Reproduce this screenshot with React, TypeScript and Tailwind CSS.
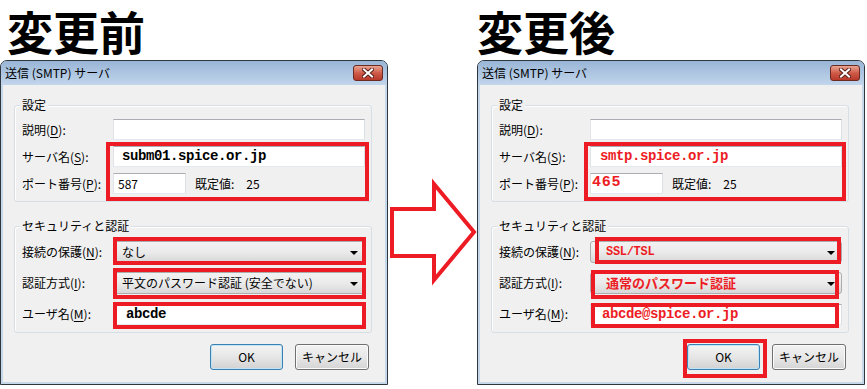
import React from 'react';

const ui = "font-['Noto_Sans_CJK_JP',sans-serif]";
const mono = "font-['Liberation_Mono',monospace]";

// mnemonic label like 説明(D):
const Label = ({ text, k }: { text: string; k: string }) => (
    <span className="text-[12px] leading-[16px] text-black whitespace-nowrap">
        {text}(<span className="underline underline-offset-[2px]">{k}</span>):
    </span>
);

const TextBox = ({ children, className = '' }: { children?: React.ReactNode; className?: string }) => (
    <div className={`h-[21px] bg-white border border-[#abadb3] border-l-[#e2e3ea] border-r-[#dbdfe6] border-b-[#e3e9ef] flex items-center overflow-hidden ${className}`}>
        {children}
    </div>
);

const Combo = ({ children }: { children?: React.ReactNode }) => (
    <div className="h-[22px] rounded-[3px] border border-[#acacac] bg-linear-to-b from-[#f2f2f2] via-[#ebebeb] to-[#d8d8d8] flex items-center justify-between pr-[6px] overflow-hidden">
        {children}
        <span className="w-0 h-0 border-x-[4px] border-x-transparent border-t-[4px] border-t-black mt-[2px]" />
    </div>
);

const Group = ({ title, children, className = '' }: { title: string; children: React.ReactNode; className?: string }) => (
    <div className={`relative border border-[#d5dfe5] rounded-[3px] shadow-[inset_1px_1px_0_#ffffff] ${className}`}>
        <span className="absolute -top-[9px] left-[5px] bg-[#f0f0f0] px-[2px] text-[12px] leading-[16px] text-black">{title}</span>
        {children}
    </div>
);

const CloseButton = () => (
    <div className="w-[30px] h-[16px] rounded-[3px] border border-[#6b2a22] bg-linear-to-b from-[#e8a493] via-[#cf5a48] to-[#b8382a] flex items-center justify-center">
        <svg width="12" height="10" viewBox="0 0 12 10">
            <path d="M2 1.5 L10 8.5 M10 1.5 L2 8.5" stroke="#5a1f18" strokeWidth="4" strokeLinecap="square" />
            <path d="M2 1.5 L10 8.5 M10 1.5 L2 8.5" stroke="#ffffff" strokeWidth="2" strokeLinecap="square" />
        </svg>
    </div>
);

interface DialogProps {
    server: React.ReactNode;
    port: React.ReactNode;
    security: React.ReactNode;
    auth: React.ReactNode;
    user: React.ReactNode;
    marks: string[];
}

const Dialog = ({ server, port, security, auth, user, marks }: DialogProps) => (
    <div className={`relative w-[388px] h-[325px] flex flex-col rounded-t-[7px] border border-[#2e3640] bg-[#c6d7ea] ${ui}`}>
        {/* title bar */}
        <div className="h-[24px] flex items-start justify-between pl-[4px] pr-[4px] pt-[4px] rounded-t-[6px] bg-linear-to-b from-[#99b5d6] to-[#c2d6ec]">
            <span className="text-[12px] leading-[16px] text-black">送信 (SMTP) サーバ</span>
            <CloseButton />
        </div>

        {/* body */}
        <div className="flex-1 mx-[2px] mb-[2px] bg-[#f0f0f0] pl-[11px] pr-[13px] pt-[20px] flex flex-col">
            <Group title="設定">
                <div className="grid grid-cols-[91px_1fr] gap-y-[6px] items-center pt-[13px] pb-[7px] pl-[7px] pr-[6px]">
                    <Label text="説明" k="D" />
                    <TextBox />
                    <Label text="サーバ名" k="S" />
                    <TextBox>{server}</TextBox>
                    <Label text="ポート番号" k="P" />
                    <div className="flex items-center">
                        <TextBox className="w-[73px]">{port}</TextBox>
                        <span className="ml-[9px] text-[12px] leading-[16px] text-black">既定値:</span>
                        <span className="ml-[12px] text-[12px] leading-[16px] text-black">25</span>
                    </div>
                </div>
            </Group>

            <Group title="セキュリティと認証" className="mt-[24px]">
                <div className="grid grid-cols-[91px_1fr] grid-rows-[22px_22px_22px] gap-y-[9px] items-center pt-[14px] pb-[7px] pl-[7px] pr-[6px]">
                    <Label text="接続の保護" k="N" />
                    <Combo>{security}</Combo>
                    <Label text="認証方式" k="I" />
                    <Combo>{auth}</Combo>
                    <Label text="ユーザ名" k="M" />
                    <TextBox className="h-[20px]">{user}</TextBox>
                </div>
            </Group>

            <div className="flex justify-end gap-[12px] mt-[11px] pr-[3px]">
                <button className="w-[73px] h-[26px] rounded-[3px] border border-[#3c7fb1] bg-linear-to-b from-[#f4f4f4] via-[#e6e6e6] to-[#d2d2d2] shadow-[inset_0_0_0_1px_#bfe3f7] text-[12px] text-black">
                    OK
                </button>
                <button className="w-[74px] h-[26px] rounded-[3px] border border-[#707070] bg-linear-to-b from-[#f2f2f2] via-[#e8e8e8] to-[#d4d4d4] shadow-[inset_0_0_0_1px_#fbfbfb] text-[12px] text-black">
                    キャンセル
                </button>
            </div>
        </div>

        {/* red annotation frames */}
        {marks.map((m, i) => (
            <div key={i} className={`absolute border-[4px] border-[#ed1c24] pointer-events-none ${m}`} />
        ))}
    </div>
);

const App: React.FC = () => {
    const red = 'text-[#ed1c24]';
    return (
        <div className="w-[867px] h-[389px] bg-white flex overflow-hidden">
            {/* BEFORE */}
            <div className="w-[388px] flex flex-col">
                <div className={`h-[60px] pl-[7px] text-[46px] font-bold leading-[60px] text-black ${ui}`}>変更前</div>
                <Dialog
                    server={<span className={`pl-[8px] ${mono} font-bold text-[14px] tracking-[-0.4px] text-black`}>subm01.spice.or.jp</span>}
                    port={<span className="pl-[4px] text-[12px] text-black">587</span>}
                    security={<span className="pl-[8px] text-[12px] text-black">なし</span>}
                    auth={<span className="pl-[8px] text-[12px] text-black whitespace-nowrap">平文のパスワード認証 (安全でない)</span>}
                    user={<span className={`pl-[12px] ${mono} font-bold text-[14px] tracking-[-0.4px] text-black`}>abcde</span>}
                    marks={[
                        'left-[105px] top-[81px] w-[263px] h-[59px]',
                        'left-[112px] top-[176px] w-[253px] h-[28px]',
                        'left-[112px] top-[207px] w-[253px] h-[31px]',
                        'left-[112px] top-[241px] w-[253px] h-[27px]',
                    ]}
                />
            </div>

            {/* arrow */}
            <div className="w-[89px] flex flex-col">
                <svg className="mt-[178px] overflow-visible" width="89" height="108" viewBox="0 0 89 108">
                    <polygon
                        points="4,31 46,31 46,6 86,54 46,102 46,78 4,78"
                        fill="none"
                        stroke="#ed1c24"
                        strokeWidth="4"
                        strokeLinejoin="miter"
                    />
                </svg>
            </div>

            {/* AFTER */}
            <div className="w-[388px] flex flex-col">
                <div className={`h-[60px] pl-0 text-[46px] font-bold leading-[60px] text-black ${ui}`}>変更後</div>
                <Dialog
                    server={<span className={`pl-[9px] ${mono} font-bold text-[14px] tracking-[-0.4px] ${red}`}>smtp.spice.or.jp</span>}
                    port={<span className={`pl-[1px] ${mono} font-bold text-[15px] tracking-[0.8px] ${red}`}>465</span>}
                    security={<span className={`pl-[15px] ${mono} font-bold text-[12px] tracking-[-0.3px] ${red}`}>SSL/TSL</span>}
                    auth={<span className={`pl-[15px] font-bold text-[13px] whitespace-nowrap ${red}`}>通常のパスワード認証</span>}
                    user={<span className={`pl-[11px] ${mono} font-bold text-[14px] tracking-[-0.4px] ${red}`}>abcde@spice.or.jp</span>}
                    marks={[
                        'left-[106px] top-[81px] w-[262px] h-[59px]',
                        'left-[117px] top-[176px] w-[246px] h-[27px]',
                        'left-[113px] top-[209px] w-[248px] h-[29px]',
                        'left-[113px] top-[242px] w-[248px] h-[25px]',
                        'left-[205px] top-[278px] w-[84px] h-[39px]',
                    ]}
                />
            </div>
        </div>
    );
};

export default App;
